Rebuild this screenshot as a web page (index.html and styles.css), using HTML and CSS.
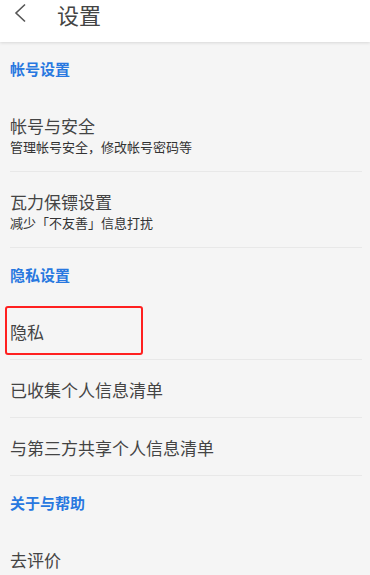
FILE: index.html
```html
<!DOCTYPE html>
<html lang="zh-CN">
<head>
<meta charset="utf-8">
<link rel="stylesheet" href="styles.css">
</head>
<body>
<header class="topbar">
  <svg class="back" width="16" height="22" viewBox="0 0 16 22"><path d="M13 2.5 L4 11 L13 19.5" fill="none" stroke="#555" stroke-width="1.6"/></svg>
  <h1 class="title">设置</h1>
</header>
<main class="list">
  <div class="section">帐号设置</div>
  <div class="row double">
    <div class="row-title">帐号与安全</div>
    <div class="row-sub">管理帐号安全，修改帐号密码等</div>
  </div>
  <div class="row double">
    <div class="row-title">瓦力保镖设置</div>
    <div class="row-sub">减少「不友善」信息打扰</div>
  </div>
  <div class="section">隐私设置</div>
  <div class="row single highlight-row">
    <div class="row-title">隐私</div>
    <div class="highlight"></div>
  </div>
  <div class="row single"><div class="row-title">已收集个人信息清单</div></div>
  <div class="row single"><div class="row-title">与第三方共享个人信息清单</div></div>
  <div class="section">关于与帮助</div>
  <div class="row single"><div class="row-title">去评价</div></div>
</main>
</body>
</html>
```
FILE: styles.css
```css
* { box-sizing: border-box; margin: 0; padding: 0; }
html, body { background: #f5f5f5; }
body {
  font-family: "Noto Sans CJK SC", "Noto Sans", sans-serif;
  width: 370px;
  overflow: hidden;
}
.topbar {
  height: 42px;
  background: #fff;
  display: flex;
  align-items: flex-start;
  padding-left: 12px;
  box-shadow: 0 1px 3px rgba(0,0,0,0.12);
  position: relative;
  z-index: 1;
}
.back { display: block; margin-top: 2px; }
.title {
  font-size: 22px;
  font-weight: 400;
  color: #444;
  margin-left: 29px;
  line-height: 28px;
}
.list { padding: 0 8px 0 10px; }
.section {
  height: 54px;
  display: flex;
  align-items: center;
  font-size: 15px;
  font-weight: 600;
  color: #2878e0;
  padding-bottom: 2px;
}
.row {
  border-bottom: 1px solid #e8e8e8;
  color: #444;
  position: relative;
}
.row.single {
  height: 58px;
  display: flex;
  align-items: center;
  padding-top: 2px;
}
.row.double {
  height: 76px;
  padding-top: 19px;
}
.row-title { font-size: 17px; line-height: 22px; }
.row-sub { font-size: 13px; line-height: 18px; color: #333; margin-top: 1px; }
.highlight {
  position: absolute;
  left: -5px;
  top: 4px;
  width: 138px;
  height: 49px;
  border: 2px solid #ff2020;
  border-radius: 3px;
}
```
